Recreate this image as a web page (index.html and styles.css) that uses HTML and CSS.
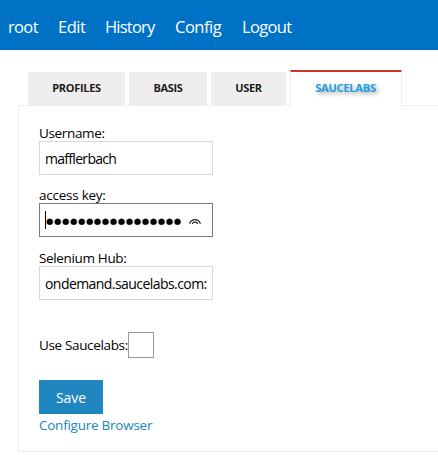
FILE: index.html
```html
<!DOCTYPE html>
<html lang="en">
<head>
<meta charset="utf-8">
<title>Config</title>
<link rel="stylesheet" href="styles.css">
</head>
<body>
<nav class="navbar">
  <a class="nav-root">root</a><a class="nav-edit">Edit</a><a class="nav-history">History</a><a class="nav-config">Config</a><a class="nav-logout">Logout</a>
</nav>
<main class="content">
  <div class="tabs">
    <a class="tab tab-profiles">PROFILES</a>
    <a class="tab tab-basis">BASIS</a>
    <a class="tab tab-user">USER</a>
    <a class="tab active"><span>SAUCELABS</span></a>
  </div>
  <form class="panel">
    <label class="label username">Username:</label>
    <div class="field"><span class="value-user">mafflerbach</span></div>
    <label class="label key">access key:</label>
    <div class="field focused"><i class="caret"></i><span class="dots">●●●●●●●●●●●●●●●●●</span>
      <svg class="reveal" width="12" height="8" viewBox="0 0 12 8" fill="none" stroke="#222" stroke-width="1.2"><path d="M.6 5.8C2.4 .3 9.6 .3 11.4 5.8M3.3 5.8C3.8 3.1 8.2 3.1 8.7 5.8"/></svg>
    </div>
    <label class="label hub">Selenium Hub:</label>
    <div class="field"><span class="value-hub">ondemand.saucelabs.com:</span></div>
    <div class="check-row"><label class="label use">Use Saucelabs:</label><i class="checkbox"></i></div>
    <button class="save" type="button">Save</button>
    <a class="configure">Configure Browser</a>
  </form>
</main>
</body>
</html>
```
FILE: styles.css
```css
* { box-sizing: border-box; }
body {
  margin: 0;
  height: 455px;
  overflow: hidden;
  background: #fff;
  color: #000;
  font: 14px/16px "Open Sans", "Noto Sans", sans-serif;
  white-space: nowrap;
}
.navbar {
  display: flex;
  height: 50px;
  padding: 14px 0 0 8px;
  background: #0072c6;
  color: #fff;
  font-size: 16.5px;
  line-height: 25px;
}
.nav-root { width: 50px; letter-spacing: -.65px; }
.nav-edit { width: 47px; letter-spacing: -.5px; }
.nav-history { width: 70px; letter-spacing: -.8px; }
.nav-config { width: 67px; letter-spacing: -.5px; }
.nav-logout { letter-spacing: -.65px; }
.content { padding: 20px 0 0 18px; }
.tabs {
  display: flex;
  align-items: flex-end;
  gap: 4px;
  height: 36px;
  padding-left: 10px;
}
.tab {
  height: 34px;
  background: #eee;
  color: #1d1d1d;
  font-size: 11px;
  font-weight: 700;
  line-height: 32px;
  text-align: center;
  letter-spacing: -.3px;
}
.tab-profiles { width: 97px; }
.tab-basis { width: 78px; }
.tab-user { width: 75px; }
.tab.active {
  z-index: 1;
  width: 112px;
  height: 36px;
  border: solid #eee;
  border-width: 0 1px;
  border-top: 2px solid #ce352c;
  background: #fff;
  color: #1ba1e2;
  text-shadow: 2px 2px 4px rgba(0, 0, 0, .4);
}
.tab.active span { margin-right: 1px; letter-spacing: -.2px; }
.panel {
  display: flex;
  flex-direction: column;
  align-items: flex-start;
  width: 440px;
  height: 347px;
  margin-top: -1px;
  padding: 19px 20px 0;
  border: 1px solid #eee;
}
.label {
  height: 16px;
  font-size: 13.5px;
  line-height: 17px;
  letter-spacing: -.35px;
}
.key { margin-top: 12px; letter-spacing: -.25px; }
.hub { margin-top: 13px; }
.field {
  display: flex;
  align-items: center;
  width: 174px;
  height: 34px;
  padding: 0 5px 0 5px;
  border: 1px solid #d9d9d9;
  overflow: hidden;
}
.focused { border-color: #787878; }
.value-user { padding-top: 1px; letter-spacing: -.7px; }
.value-hub { padding-top: 1px; letter-spacing: -.56px; }
.caret {
  flex: none;
  width: 1px;
  height: 18px;
  margin-top: -1px;
  background: #000;
}
.dots {
  flex: none;
  width: 143px;
  padding-top: 2px;
  font: 8.5px/16px "DejaVu Sans", sans-serif;
  letter-spacing: .56px;
}
.reveal {
  flex: none;
  margin-top: 3px;
}
.check-row {
  display: flex;
  align-items: center;
  height: 26px;
  margin-top: 32px;
}
.check-row .label { width: 89px; letter-spacing: -.35px; }
.checkbox {
  width: 26px;
  height: 26px;
  border: 1px solid #999;
}
.save {
  width: 64px;
  height: 34px;
  margin-top: 22px;
  padding: 1px 0 0;
  border: 0;
  background: #2086bf;
  color: #fff;
  font: 14px/20px "Open Sans", "Noto Sans", sans-serif;
  letter-spacing: -.1px;
}
.configure {
  margin-top: 3px;
  color: #2086bf;
  font-size: 13.5px;
  letter-spacing: -.25px;
}
```
